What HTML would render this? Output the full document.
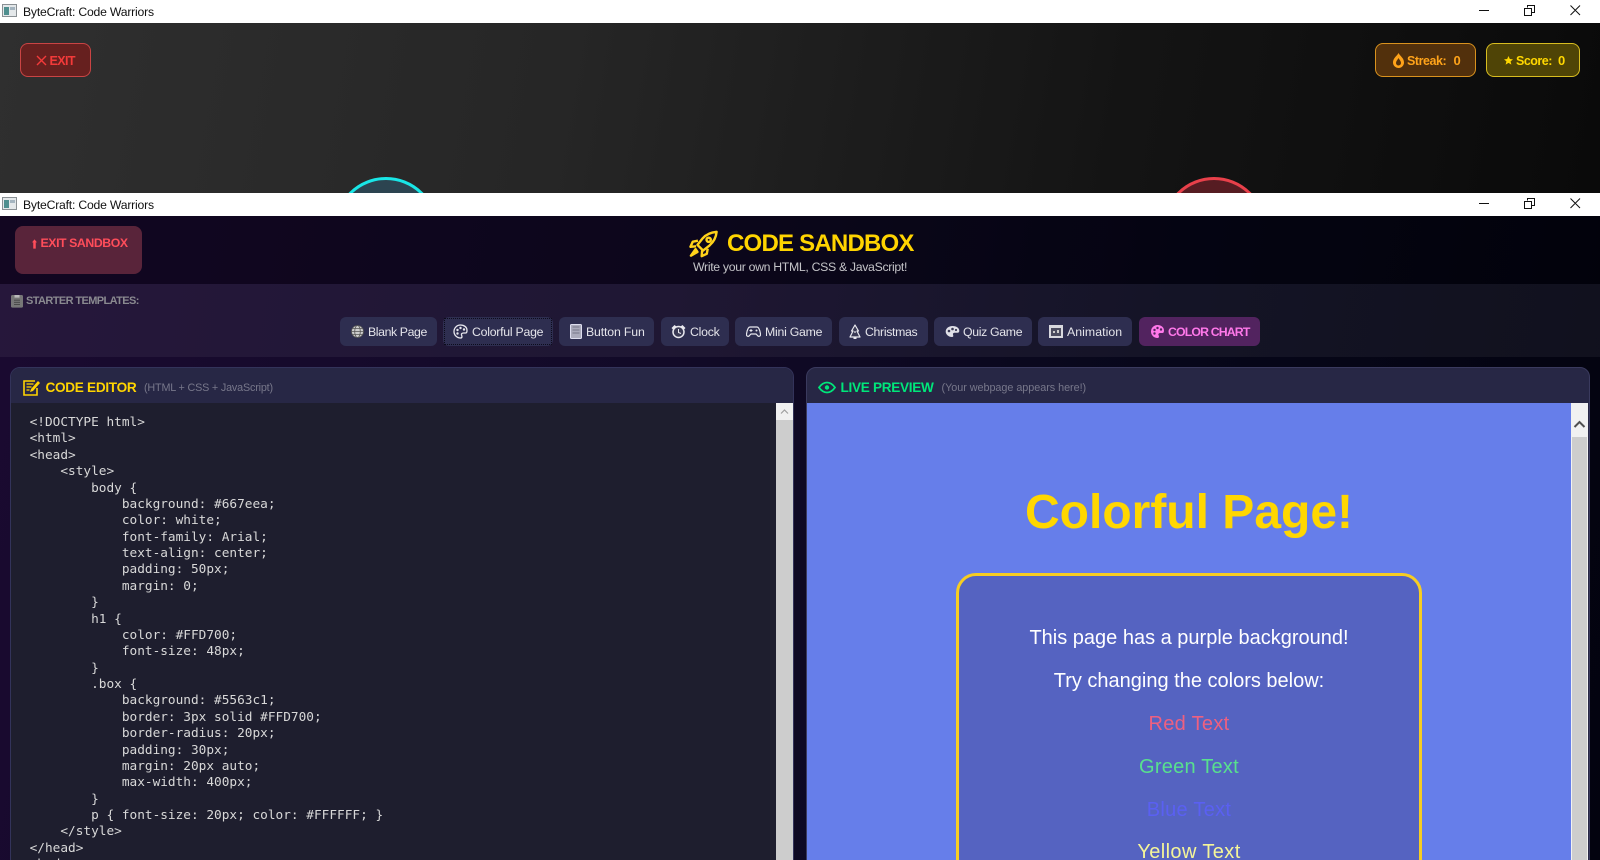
<!DOCTYPE html>
<html lang="en"><head><meta charset="utf-8"><title>ByteCraft: Code Warriors</title>
<style>
html,body{margin:0;padding:0;width:1600px;height:860px;overflow:hidden;background:#000}
body{position:relative;font-family:"Liberation Sans",sans-serif}
div,span,svg,pre,h1,p{position:absolute;margin:0;padding:0;box-sizing:border-box}
.t{white-space:nowrap;line-height:16px}
.bar{left:0;width:1600px;height:23px;background:#fff}
.bar .t{left:23px;top:4px;font-size:12.2px;letter-spacing:-.2px;color:#111}
.tab{top:317px;height:29px;background:#2e2e50;border-radius:6px}
.l{top:324px;font-size:12.3px;color:#e4e4ea;letter-spacing:-.25px}
pre{left:29.6px;top:415px;font:12.78px/16.37px "DejaVu Sans Mono",monospace;color:#d8d8d8}
.pv p{left:0;width:466px;text-align:center;font-size:20px;line-height:24px;white-space:nowrap}
</style></head><body>

<!-- First window -->
<div class="bar" style="top:0"><span class="t">ByteCraft: Code Warriors</span></div>
<svg style="left:2px;top:4px" width="16" height="14" viewBox="0 0 16 14"><rect x=".5" y=".5" width="14" height="12" fill="#e4e8ea" stroke="#8a9094"/><rect x="2" y="3" width="5" height="8" fill="#4f8f8f"/><rect x="8" y="3" width="5" height="3" fill="#a5b5c0"/></svg>
<svg style="left:1470px;top:0" width="120" height="23" fill="none" stroke="#111"><path d="M9 10.500h10M57.500 7.500V5.500h7v7h-2.500M54.500 8.500h7v7h-7zM100.500 5.500l9.500 9.500M110 5.500l-9.500 9.500"/></svg>
<div style="left:0;top:23px;width:1600px;height:170px;background:linear-gradient(100deg,#2f2f2f 0%,#262626 35%,#141414 70%,#0a0a0a 100%);overflow:hidden">
  <div style="left:334px;top:154px;width:104px;height:104px;border-radius:50%;border:3px solid #19e6e6;background:#2c4450"></div>
  <div style="left:1162px;top:154px;width:104px;height:104px;border-radius:50%;border:3px solid #e8404a;background:#561c22"></div>
  <div style="left:20px;top:20px;width:71px;height:34px;border-radius:8px;border:1.500px solid #c94444;background:#66201f"></div>
  <div style="left:1375px;top:20px;width:101px;height:34px;border-radius:8px;border:1.500px solid #d9921e;background:#52300c"></div>
  <div style="left:1486px;top:20px;width:94px;height:34px;border-radius:8px;border:1.500px solid #d8bd20;background:#4f4406"></div>
</div>
<svg style="left:36px;top:55px" width="11" height="11" fill="none" stroke="#f33a3a" stroke-width="1.400"><path d="M1 1l9 9M10 1l-9 9"/></svg>
<span class="t" style="left:49.500px;top:53px;font-size:12.500px;font-weight:700;color:#f33a3a;letter-spacing:-.6px">EXIT</span>
<svg style="left:1392px;top:52px" width="13" height="17" viewBox="0 0 13 17"><path d="M6.500 1C8 4 12 6 12 10.500a5.500 5.500 0 0 1-11 0C1 6 5 4 6.500 1z" fill="#ffa31a"/><path d="M6.500 6c1 2 2.500 3 2.500 5a2.500 2.500 0 0 1-5 0c0-2 1.500-3 2.500-5z" fill="#52300c"/></svg>
<span class="t" style="left:1407px;top:53px;font-size:12.500px;font-weight:700;color:#ffa31a;letter-spacing:-.45px">Streak:</span>
<span class="t" style="left:1453.500px;top:53px;font-size:13px;font-weight:700;color:#ffa31a">0</span>
<svg style="left:1504px;top:56px" width="9" height="9" viewBox="0 0 10 10"><path d="M5 0l1.500 3.400 3.500.3-2.700 2.300.9 3.600L5 7.700 1.800 9.600l.9-3.600L0 3.700l3.500-.3z" fill="#ffd700"/></svg>
<span class="t" style="left:1516px;top:53px;font-size:12.500px;font-weight:700;color:#ffd700;letter-spacing:-.5px">Score:</span>
<span class="t" style="left:1558px;top:53px;font-size:13px;font-weight:700;color:#ffd700">0</span>

<!-- Second window -->
<div class="bar" style="top:193px"><span class="t">ByteCraft: Code Warriors</span></div>
<svg style="left:2px;top:197px" width="16" height="14" viewBox="0 0 16 14"><rect x=".5" y=".5" width="14" height="12" fill="#e4e8ea" stroke="#8a9094"/><rect x="2" y="3" width="5" height="8" fill="#4f8f8f"/><rect x="8" y="3" width="5" height="3" fill="#a5b5c0"/></svg>
<svg style="left:1470px;top:193px" width="120" height="23" fill="none" stroke="#111"><path d="M9 10.500h10M57.500 7.500V5.500h7v7h-2.500M54.500 8.500h7v7h-7zM100.500 5.500l9.500 9.500M110 5.500l-9.500 9.500"/></svg>

<div style="left:0;top:216px;width:1600px;height:644px;background:linear-gradient(100deg,#1a0a30 0%,#120a28 40%,#07071a 70%,#03030f 100%)"></div>
<!-- Header -->
<div style="left:0;top:216px;width:1600px;height:68px;background:rgba(0,0,0,.3)"></div>
<div style="left:15px;top:226px;width:127px;height:48px;border-radius:8px;background:#59243a"></div>
<svg style="left:31.500px;top:238.500px" width="5" height="10" viewBox="0 0 6 11"><path d="M3 0l3 3.500H4.500V11h-3V3.500H0z" fill="#ff4d5a"/></svg>
<span class="t" style="left:40.500px;top:235px;font-size:12.300px;font-weight:700;color:#ff4d5a;letter-spacing:-.42px">EXIT SANDBOX</span>

<svg style="left:689px;top:230px" width="30" height="28" viewBox="0 0 32 30" fill="none" stroke="#ffd21a" stroke-width="2.600" stroke-linejoin="round"><path d="M29.500 2c-6 .5-11 2.500-15 7l-5.500 7 6 6 7-5.500c4.500-4 7-9 7.500-14.500z"/><circle cx="21" cy="10.500" r="2.300"/><path d="M9.500 11.500L4 12.500 1.500 18l6-.5M20 20l-1 5.500-5.500 2.500.5-6"/><path d="M7 20.500l-5 7 7-4z" fill="#ffd21a"/></svg>
<span class="t" style="left:727px;top:230px;font-size:24px;line-height:28px;font-weight:700;color:#ffd400;letter-spacing:-.78px">CODE SANDBOX</span>
<span class="t" style="left:693px;top:259px;font-size:12.300px;color:#c4c4c8;letter-spacing:-.33px">Write your own HTML, CSS &amp; JavaScript!</span>

<!-- Templates -->
<div style="left:0;top:284px;width:1600px;height:73px;background:rgba(255,255,255,.055)"></div>
<svg style="left:11px;top:295px" width="12" height="13" viewBox="0 0 12 15" preserveAspectRatio="none"><rect width="12" height="14.500" rx="1.500" fill="#777"/><rect x="3.500" y="0" width="5" height="3" fill="#bbb"/><path d="M3 6h6M3 8.500h6M3 11h6" stroke="#444"/></svg>
<span class="t" style="left:26px;top:292.500px;font-size:11px;font-weight:700;color:#8a8a90;letter-spacing:-.6px">STARTER TEMPLATES:</span>

<div class="tab" style="left:340px;width:97px"></div>
<svg style="left:351px;top:325px" width="13" height="13" viewBox="0 0 13 13" fill="#ccc" stroke="#555" stroke-width=".8"><circle cx="6.500" cy="6.500" r="6"/><ellipse cx="6.500" cy="6.500" rx="2.800" ry="6" fill="none"/><path d="M.5 6.500h12M1.500 3.500h10M1.500 9.500h10" fill="none"/></svg>
<span class="t l" style="left:368px;letter-spacing:-.4px">Blank Page</span>

<div class="tab" style="left:443px;width:110px"></div>
<div style="left:444px;top:318px;width:108px;height:27px;border:1px dotted #0c0c1c"></div>
<svg style="left:453px;top:324px" width="15" height="15" viewBox="0 0 15 15"><path d="M7.500 1a6.500 6.500 0 1 0 0 13c2 0 1.500-2 1-3s.5-2 2-2h2c1 0 1.500-1 1.500-2.500C14 3 11 1 7.500 1z" fill="none" stroke="#e8e8ee" stroke-width="1.300"/><circle cx="4.500" cy="6" r="1.200" fill="#e8e8ee"/><circle cx="7.500" cy="4" r="1.200" fill="#e8e8ee"/><circle cx="11" cy="5.500" r="1.200" fill="#e8e8ee"/><circle cx="4.500" cy="9.500" r="1.200" fill="#e8e8ee"/></svg>
<span class="t l" style="left:472px">Colorful Page</span>

<div class="tab" style="left:559px;width:95px"></div>
<svg style="left:570px;top:324px" width="12" height="15" viewBox="0 0 12 15"><rect x=".5" y=".5" width="11" height="14" rx="1" fill="#aab" stroke="#dde"/><path d="M2.500 3h7M2.500 6h7M2.500 9h7" stroke="#778"/></svg>
<span class="t l" style="left:586px;letter-spacing:-.15px">Button Fun</span>

<div class="tab" style="left:661px;width:68px"></div>
<svg style="left:671px;top:324px" width="15" height="15" viewBox="0 0 15 15"><circle cx="7.500" cy="8" r="5.500" fill="#3a3a55" stroke="#e8e8ee" stroke-width="1.500"/><path d="M7.500 5v3.500l2.500 1" fill="none" stroke="#e8e8ee"/><path d="M.5 4L3.500 1l2 1.500-3.500 3zM14.500 4l-3-3-2 1.500 3.500 3z" fill="#e8e8ee"/></svg>
<span class="t l" style="left:690px">Clock</span>

<div class="tab" style="left:735px;width:97px"></div>
<svg style="left:746px;top:325.500px" width="15" height="12" viewBox="0 0 15 12"><path d="M4 1h7c2 0 3 4 3.500 7 .3 2.500-2 3-3 1.500L10 8H5L3.500 9.500c-1 1.500-3.300 1-3-1.500C1 5 2 1 4 1z" fill="none" stroke="#e8e8ee" stroke-width="1.200"/><path d="M3.500 4.500h3M5 3v3" stroke="#e8e8ee"/><circle cx="10.500" cy="4.500" r="1" fill="#e8e8ee"/></svg>
<span class="t l" style="left:765px">Mini Game</span>

<div class="tab" style="left:838.500px;width:89px"></div>
<svg style="left:849px;top:324px" width="12" height="15" viewBox="0 0 12 15"><path d="M6 1L2.500 7h1.500L1 13h10L8 7h1.500z" fill="#3a3a55" stroke="#e8e8ee" stroke-width="1.200" stroke-linejoin="round"/><circle cx="6" cy="8" r=".9" fill="#e8e8ee"/><rect x="4.500" y="13" width="3" height="2" fill="#e8e8ee"/></svg>
<span class="t l" style="left:865px;letter-spacing:-.33px">Christmas</span>

<div class="tab" style="left:934px;width:98px"></div>
<svg style="left:945px;top:325px" width="15" height="13" viewBox="0 0 15 13"><path d="M7.500 1C3.500 1 .7 3.500.7 6.500S3.500 12 7 12c1.800 0 1.300-1.500 1-2.500s.5-1.800 2-1.800h2.500c1.200 0 1.800-.8 1.800-2C14.300 3 11.500 1 7.500 1z" fill="#e0e0e8"/><circle cx="4" cy="6" r="1.300" fill="#3a3a55"/><circle cx="7.500" cy="4" r="1.300" fill="#3a3a55"/><circle cx="11" cy="5" r="1.100" fill="#3a3a55"/></svg>
<span class="t l" style="left:963px;letter-spacing:-.33px">Quiz Game</span>

<div class="tab" style="left:1038px;width:94px"></div>
<svg style="left:1049px;top:325px" width="14" height="13" viewBox="0 0 14 13"><rect width="14" height="13" fill="#d8d8de"/><rect x="2" y="3" width="10" height="8" fill="#4c4c60"/><path d="M4 6h2v2H4zM8 5h2v3H8z" fill="#ccc"/></svg>
<span class="t l" style="left:1067px;letter-spacing:.05px">Animation</span>

<div class="tab" style="left:1139px;width:121px;background:#52235f"></div>
<svg style="left:1150px;top:324px" width="15" height="15" viewBox="0 0 15 15"><path d="M7.500 1a6.500 6.500 0 1 0 0 13c2 0 1.500-2 1-3s.5-2 2-2h2c1 0 1.500-1 1.500-2.500C14 3 11 1 7.500 1z" fill="#ff78ea"/><circle cx="4.500" cy="6" r="1.200" fill="#52235f"/><circle cx="7.500" cy="4" r="1.200" fill="#52235f"/><circle cx="11" cy="5.500" r="1.200" fill="#52235f"/><circle cx="4.500" cy="9.500" r="1.200" fill="#52235f"/></svg>
<span class="t" style="left:1168px;top:324px;font-size:12.300px;font-weight:700;color:#ff78ea;letter-spacing:-.85px">COLOR CHART</span>

<!-- Editor panel -->
<div style="left:10px;top:367px;width:784px;height:500px;border-radius:10px 10px 0 0;border:1.500px solid #33335a;background:#1e1e2e;overflow:hidden">
  <div style="left:0;top:0;width:782px;height:35px;background:#272745"></div>
</div>
<svg style="left:23px;top:379px" width="18" height="17" viewBox="0 0 18 17" fill="none" stroke="#ffd400" stroke-width="1.600"><path d="M14 9v7H1V2h11"/><path d="M3.500 5h7M3.500 8h5M3.500 11h3" stroke-width="1.300"/><path d="M7 13l1-3 7-8 2 2-7 8z" fill="#ffd400" stroke="none"/></svg>
<span class="t" style="left:45.500px;top:379.500px;font-size:13.600px;font-weight:700;color:#ffd400;letter-spacing:-.3px">CODE EDITOR</span>
<span class="t" style="left:144px;top:380px;font-size:10.800px;color:#77778a;letter-spacing:-.18px">(HTML + CSS + JavaScript)</span>
<pre>&lt;!DOCTYPE html&gt;
&lt;html&gt;
&lt;head&gt;
    &lt;style&gt;
        body {
            background: #667eea;
            color: white;
            font-family: Arial;
            text-align: center;
            padding: 50px;
            margin: 0;
        }
        h1 {
            color: #FFD700;
            font-size: 48px;
        }
        .box {
            background: #5563c1;
            border: 3px solid #FFD700;
            border-radius: 20px;
            padding: 30px;
            margin: 20px auto;
            max-width: 400px;
        }
        p { font-size: 20px; color: #FFFFFF; }
    &lt;/style&gt;
&lt;/head&gt;
&lt;body&gt;</pre>
<div style="left:776px;top:403px;width:17px;height:457px;background:#cdcdcd"></div>
<div style="left:776px;top:403px;width:17px;height:17px;background:#f1f1f1"></div>
<svg style="left:776px;top:403px" width="17" height="17" fill="none" stroke="#a0a0a0" stroke-width="1.200"><path d="M5 10.500l3.500-3.500 3.500 3.500"/></svg>

<!-- Preview panel -->
<div style="left:806px;top:367px;width:784px;height:500px;border-radius:10px 10px 0 0;border:1.500px solid #3a3a5e;background:#272745;overflow:hidden"></div>
<svg style="left:818px;top:381px" width="18" height="13" viewBox="0 0 18 13" fill="none" stroke="#00e67a" stroke-width="1.800"><path d="M1 6.500C3.500 3 6 1.500 9 1.500s5.500 1.500 8 5c-2.500 3.500-5 5-8 5s-5.500-1.500-8-5z"/><circle cx="9" cy="6.500" r="2.200" fill="#00e67a" stroke="none"/></svg>
<span class="t" style="left:840.500px;top:379.500px;font-size:13.600px;font-weight:700;color:#00e67a;letter-spacing:-.3px">LIVE PREVIEW</span>
<span class="t" style="left:941.500px;top:380px;font-size:10.800px;color:#77778a;letter-spacing:-.03px">(Your webpage appears here!)</span>
<div style="left:807px;top:403px;width:764px;height:457px;background:#667eea;overflow:hidden"></div>
<div style="left:1571px;top:403px;width:17px;height:457px;background:#f1f1f1"></div>
<div style="left:1572px;top:437px;width:15px;height:423px;background:#cdcdcd"></div>
<svg style="left:1571px;top:402px" width="17" height="34" fill="none" stroke="#505050" stroke-width="2"><path d="M3.500 25l5-5 5 5"/></svg>
<span class="t" style="left:1025px;top:483.500px;font-size:48px;line-height:58px;font-weight:700;color:#ffd700">Colorful Page!</span>
<div class="pv" style="left:956px;top:573px;width:466px;height:320px;border:3px solid #f7cd22;border-radius:20px;background:#5563c1">
</div>
<div class="pv" style="left:956px;top:573px;width:466px;height:287px;overflow:hidden">
  <p style="top:53px;color:#fff">This page has a purple background!</p>
  <p style="top:96px;color:#fff">Try changing the colors below:</p>
  <p style="top:138.500px;color:#ee6080;letter-spacing:.3px">Red Text</p>
  <p style="top:181.500px;color:#58e08e;letter-spacing:.25px">Green Text</p>
  <p style="top:224.500px;color:#5a60f2;letter-spacing:.3px">Blue Text</p>
  <p style="top:267px;color:#f5f599;letter-spacing:.4px">Yellow Text</p>
</div>
</body></html>
